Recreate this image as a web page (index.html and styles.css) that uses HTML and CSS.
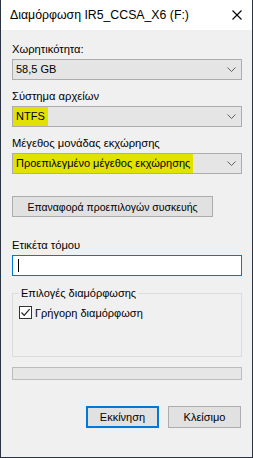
FILE: index.html
```html
<!DOCTYPE html>
<html lang="el">
<head>
<meta charset="utf-8">
<link rel="stylesheet" href="styles.css">
</head>
<body>
<div class="window">
  <div class="titlebar">
    <span class="title">Διαμόρφωση IR5_CCSA_X6 (F:)</span>
    <svg class="close" width="10" height="10" viewBox="0 0 10 10"><path d="M0.5 0.5 L9.5 9.5 M9.5 0.5 L0.5 9.5" stroke="#000" stroke-width="1.1" fill="none"/></svg>
  </div>
  <div class="content">
    <div class="label first">Χωρητικότητα:</div>
    <div class="combo"><span class="val">58,5 GB</span><svg class="chev" width="9" height="5" viewBox="0 0 9 5"><path d="M0.5 0.5 L4.5 4.5 L8.5 0.5" stroke="#606060" fill="none"/></svg></div>

    <div class="label">Σύστημα αρχείων</div>
    <div class="combo"><span class="val hl">NTFS</span><svg class="chev" width="9" height="5" viewBox="0 0 9 5"><path d="M0.5 0.5 L4.5 4.5 L8.5 0.5" stroke="#606060" fill="none"/></svg></div>

    <div class="label">Μέγεθος μονάδας εκχώρησης</div>
    <div class="combo"><span class="val hl">Προεπιλεγμένο μέγεθος εκχώρησης</span><svg class="chev" width="9" height="5" viewBox="0 0 9 5"><path d="M0.5 0.5 L4.5 4.5 L8.5 0.5" stroke="#606060" fill="none"/></svg></div>

    <button class="btn reset">Επαναφορά προεπιλογών συσκευής</button>

    <div class="label vol">Ετικέτα τόμου</div>
    <div class="textbox"><span class="caret"></span></div>

    <fieldset class="group">
      <legend>Επιλογές διαμόρφωσης</legend>
      <div class="check-row">
        <span class="checkbox"><svg width="11" height="11" viewBox="0 0 11 11"><path d="M1.5 5.5 L4.2 8.3 L9.6 2.2" stroke="#222" stroke-width="1.2" fill="none"/></svg></span>
        <span>Γρήγορη διαμόρφωση</span>
      </div>
    </fieldset>

    <div class="progress"></div>

    <div class="actions">
      <button class="btn action primary">Εκκίνηση</button>
      <button class="btn action">Κλείσιμο</button>
    </div>
  </div>
</div>
</body>
</html>
```
FILE: styles.css
```css
html, body {
  margin: 0;
  padding: 0;
  background: #f0f0f0;
}
body {
  font-family: "Liberation Sans", Arial, sans-serif;
  font-size: 11.2px;
  color: #000;
}
.window {
  width: 253px;
  height: 458px;
  box-sizing: border-box;
  border: 1px solid #2b3340;
  border-top: none;
  background: #f0f0f0;
  display: flex;
  flex-direction: column;
}
.titlebar {
  height: 30px;
  background: #fff;
  display: flex;
  align-items: center;
  justify-content: space-between;
  padding: 0 10px 0 9px;
  flex: none;
}
.title {
  line-height: 15px;
  padding-top: 1px;
  font-size: 12.3px;
}
.close {
  display: block;
}
.content {
  padding: 0 10px 0 11px;
  display: flex;
  flex-direction: column;
}
.label {
  height: 15px;
  line-height: 15px;
  margin-top: 9px;
  margin-bottom: 2px;
}
.label.first {
  margin-top: 12px;
}
.combo {
  height: 21px;
  box-sizing: border-box;
  border: 1px solid #adadad;
  background: #e5e5e5;
  display: flex;
  align-items: stretch;
  justify-content: space-between;
}
.val {
  padding: 0 3px 0 3px;
  line-height: 19px;
  white-space: nowrap;
  font-size: 11px;
}
.val.hl {
  background: #e2e200;
}
.chev {
  align-self: center;
  margin-right: 5px;
}
.btn {
  font: inherit;
  color: #000;
  background: #e1e1e1;
  border: 1px solid #adadad;
  box-sizing: border-box;
  height: 21px;
  padding: 0;
  margin: 0;
  white-space: nowrap;
}
.reset {
  width: 201px;
  margin-top: 22px;
  font-size: 10.5px;
}
.label.vol {
  margin-top: 21px;
}
.textbox {
  height: 21px;
  box-sizing: border-box;
  border: 1px solid #0078d7;
  background: #fff;
  display: flex;
  align-items: center;
  padding-left: 5px;
}
.caret {
  width: 1px;
  height: 13px;
  background: #000;
}
.group {
  margin: 10px 0 0 0;
  padding: 0 6px 0 6px;
  border: 1px solid #dcdcdc;
  height: 71px;
  box-sizing: border-box;
  min-width: 0;
}
.group legend {
  padding: 0 2px;
  line-height: 15px;
  font-size: 11px;
}
.check-row {
  display: flex;
  align-items: center;
  gap: 3px;
  margin-top: 5px;
  font-size: 11px;
}
.checkbox {
  width: 13px;
  height: 13px;
  box-sizing: border-box;
  border: 1px solid #333;
  background: #fff;
  display: flex;
  align-items: center;
  justify-content: center;
}
.checkbox svg {
  display: block;
}
.progress {
  margin-top: 10px;
  height: 13px;
  box-sizing: border-box;
  border: 1px solid #bcbcbc;
  background: #e6e6e6;
}
.actions {
  display: flex;
  justify-content: flex-end;
  gap: 9px;
  margin-top: 26px;
  padding-right: 1px;
}
.action {
  width: 73px;
  height: 22px;
  font-size: 11px;
}
.primary {
  border: 2px solid #0078d7;
}
```
